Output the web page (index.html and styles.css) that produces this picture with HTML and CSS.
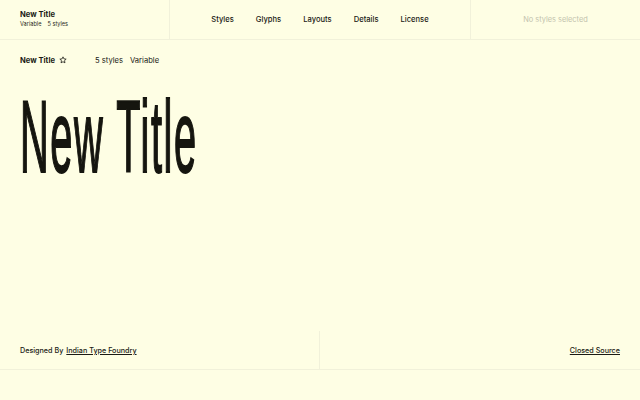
FILE: index.html
```html
<!DOCTYPE html>
<html>
<head>
<meta charset="utf-8">
<link rel="stylesheet" href="styles.css">
</head>
<body>
<div class="page">
  <header class="topbar">
    <div class="brand">
      <div class="brand-title">New Title</div>
      <div class="brand-meta"><span>Variable</span><span>5 styles</span></div>
    </div>
    <nav class="nav">
      <a>Styles</a><a>Glyphs</a><a>Layouts</a><a>Details</a><a>License</a>
    </nav>
    <div class="selection">No styles selected</div>
  </header>
  <div class="subbar">
    <div class="sub-title">New Title <svg class="star" width="8" height="8" viewBox="0 0 24 24"><path d="M12 2.5l2.9 6.2 6.6.7-5 4.5 1.4 6.6L12 17.2l-5.9 3.3 1.4-6.6-5-4.5 6.6-.7z" fill="none" stroke="#1a1a14" stroke-width="2.4" stroke-linejoin="round"/></svg></div>
    <div class="sub-meta"><span>5 styles</span><span>Variable</span></div>
  </div>
  <div class="hero"><span class="hero-text">New Title</span></div>
  <div class="spacer"></div>
  <footer class="footer">
    <div class="foot-left">Designed By <a>Indian Type Foundry</a></div>
    <div class="foot-right"><a>Closed Source</a></div>
  </footer>
  <div class="bottom"></div>
</div>
</body>
</html>
```
FILE: styles.css
```css
* { box-sizing: border-box; }
html, body { margin: 0; padding: 0; }
body {
  background: #fefee4;
  color: #1a1a14;
  font-family: Inter, "Noto Sans", "Liberation Sans", sans-serif;
}
.page {
  height: 400px;
  display: flex;
  flex-direction: column;
}
.topbar {
  height: 40px;
  display: grid;
  grid-template-columns: 170px 300px 170px;
  border-bottom: 1px solid #f1f1da;
}
.brand {
  border-right: 1px solid #f1f1da;
  padding: 10px 0 0 20px;
}
.brand-title {
  font-size: 7.6px;
  font-weight: 700;
  line-height: 10px;
}
.brand-meta {
  font-size: 5.6px;
  line-height: 8px;
  display: flex;
  gap: 6px;
  color: #2a2a22;
}
.nav {
  display: flex;
  justify-content: center;
  align-items: center;
  gap: 22px;
  font-size: 7.6px;
  font-weight: 500;
}
.selection {
  border-left: 1px solid #f1f1da;
  display: flex;
  align-items: center;
  justify-content: center;
  font-size: 7.4px;
  color: #c3c3ae;
  padding-left: 0;
}
.subbar {
  display: flex;
  align-items: center;
  height: 20px;
  margin-top: 10px;
  padding-left: 20px;
  font-size: 7.6px;
}
.sub-title {
  font-weight: 700;
  width: 75px;
  display: flex;
  align-items: center;
  gap: 4px;
}
.sub-meta {
  display: flex;
  gap: 7px;
}
.hero {
  padding-left: 20px;
  margin-top: 22px;
  height: 90px;
  line-height: 90px;
  overflow: visible;
}
.hero-text {
  display: inline-block;
  font-family: "Liberation Sans", sans-serif;
  font-size: 102px;
  font-weight: 400;
  letter-spacing: 4px;
  transform: scaleX(0.39);
  transform-origin: 0 50%;
  -webkit-text-stroke: 2px #15150f;
  color: #15150f;
  white-space: nowrap;
}
.spacer { flex: 1; }
.footer {
  height: 39px;
  display: grid;
  grid-template-columns: 320px 320px;
  border-bottom: 1px solid #f1f1da;
  font-size: 7.2px;
  font-weight: 500;
}
.foot-left {
  border-right: 1px solid #f1f1da;
  padding-left: 20px;
  display: flex;
  align-items: center;
  gap: 3px;
}
.foot-right {
  display: flex;
  align-items: center;
  justify-content: flex-end;
  padding-right: 20px;
}
.footer a {
  text-decoration: underline;
  text-underline-offset: 1px;
}
.bottom { height: 30px; }
```
